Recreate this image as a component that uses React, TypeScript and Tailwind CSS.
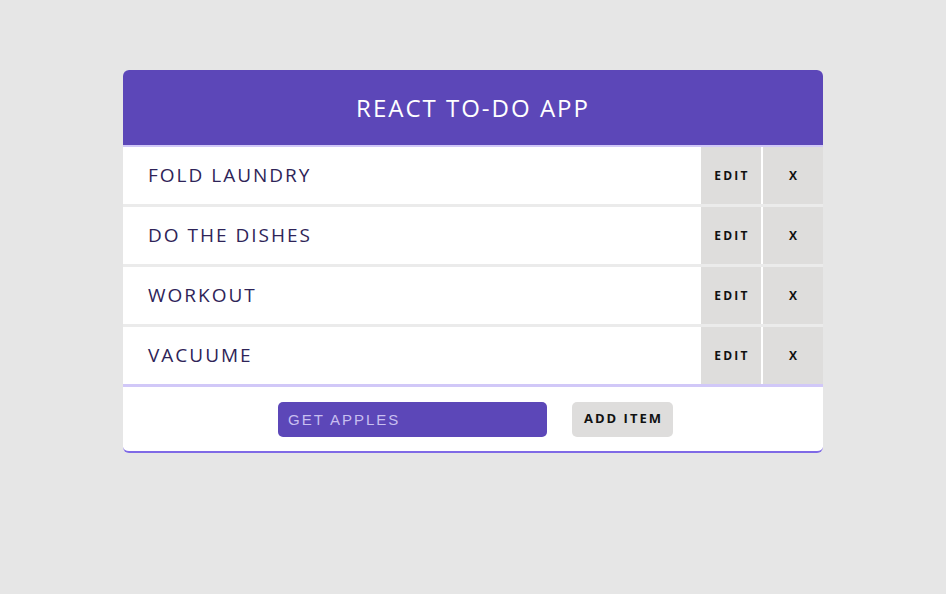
import React from "react"

const items = ["Fold laundry", "Do the dishes", "Workout", "Vacuume"]

const TodoRow: React.FC<{ text: string }> = ({ text }) => (
    <div className="flex h-[57px] bg-white">
        <p className="flex-1 flex items-center pl-[25px] text-[19px] tracking-[2px] uppercase text-[#2e2458]">
            {text}
        </p>
        <button className="w-[60px] bg-[#dedddc] pl-[2px] text-[12px] font-bold tracking-[2.2px] text-[#111]">EDIT</button>
        <button className="w-[60px] ml-[2px] bg-[#dedddc] text-[12px] font-bold text-[#111]">X</button>
    </div>
)

export default function App() {
    return (
        <div className="min-h-[594px] bg-[#e6e6e6] pt-[70px] font-['Open_Sans',sans-serif]">
            <div className="mx-auto w-[700px] rounded-[6px] overflow-hidden bg-white border-b-2 border-[#7f6ae6]">
                {/* Header */}
                <div className="h-[77px] flex items-center justify-center bg-[#5c47b8] border-b-2 border-[#d1c8f8]">
                    <h1 className="text-[24px] tracking-[2px] text-white uppercase">React To-Do App</h1>
                </div>

                {/* List */}
                <div className="flex flex-col gap-[3px] bg-[#ebebeb]">
                    {items.map((t) => (
                        <TodoRow key={t} text={t} />
                    ))}
                </div>

                {/* Footer */}
                <div className="h-[67px] border-t-[3px] border-[#d1c8f8] flex items-center justify-center gap-[25px] pl-[5px]">
                    <input
                        placeholder="GET APPLES"
                        className="w-[269px] h-[35px] rounded-[5px] bg-[#5c47b8] px-[10px] font-['Liberation_Sans',sans-serif] text-[15px] tracking-[2px] text-white placeholder:text-[#c8bff0] outline-none"
                    />
                    <button className="w-[101px] h-[35px] rounded-[5px] bg-[#dedddc] pl-[2px] text-[13px] font-bold tracking-[2px] text-[#111]">
                        ADD ITEM
                    </button>
                </div>
            </div>
        </div>
    )
}
